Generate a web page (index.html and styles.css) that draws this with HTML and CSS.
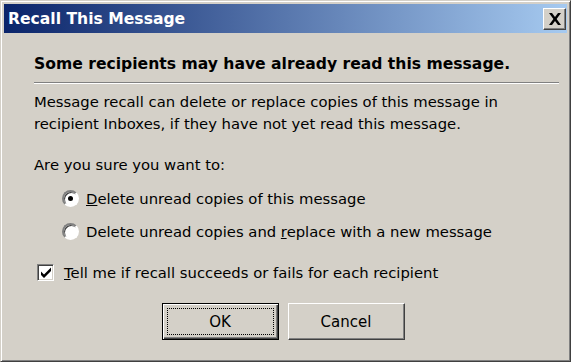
FILE: index.html
```html
<!DOCTYPE html>
<html>
<head>
<meta charset="utf-8">
<link rel="stylesheet" href="styles.css">
</head>
<body>
<div class="window">
  <div class="titlebar">
    <span class="title">Recall This Message</span>
    <span class="close">
      <svg width="14" height="12" viewBox="0 0 14 12"><path d="M1 0h3l3 4 3-4h3L8.6 6 13 12h-3L7 8 4 12H1l4.4-6z" fill="#000"/></svg>
    </span>
  </div>
  <div class="content">
    <div class="heading">Some recipients may have already read this message.</div>
    <p class="para">Message recall can delete or replace copies of this message in<br>recipient Inboxes, if they have not yet read this message.</p>
    <p class="question">Are you sure you want to:</p>
    <div class="option first">
      <span class="radio checked"></span>
      <span><u>D</u>elete unread copies of this message</span>
    </div>
    <div class="option">
      <span class="radio"></span>
      <span>Delete unread copies and <u>r</u>eplace with a new message</span>
    </div>
    <div class="check-row">
      <span class="checkbox">
        <svg width="12" height="11" viewBox="0 0 12 11"><path d="M1 4.5l3 3 7-7v3.5l-7 7-3-3z" fill="#000"/></svg>
      </span>
      <span><u>T</u>ell me if recall succeeds or fails for each recipient</span>
    </div>
    <div class="buttons">
      <button class="btn default"><span class="focus">OK</span></button>
      <button class="btn">Cancel</button>
    </div>
  </div>
</div>
</body>
</html>
```

FILE: styles.css
```css
html, body {
  margin: 0;
  padding: 0;
  background: #d4d0c8;
}
.window {
  width: 571px;
  height: 362px;
  box-sizing: border-box;
  background: #d4d0c8;
  border-top: 1px solid #d4d0c8;
  border-left: 1px solid #d4d0c8;
  border-right: 1px solid #404040;
  border-bottom: 1px solid #404040;
  box-shadow: inset 1px 1px 0 #ffffff, inset -1px -1px 0 #808080;
  padding: 3px 3px 3px 3px;
  font-family: "DejaVu Sans", sans-serif;
  color: #000;
  font-size: 14.8px;
}
.titlebar {
  height: 29px;
  background: linear-gradient(to right, #0a246a, #a6caf0);
  display: flex;
  align-items: center;
  justify-content: space-between;
  padding: 0 1px 0 4px;
}
.title {
  color: #fff;
  font-weight: bold;
  font-size: 15.6px;
}
.close {
  width: 23px;
  height: 22px;
  box-sizing: border-box;
  background: #d4d0c8;
  border-top: 1px solid #fff;
  border-left: 1px solid #fff;
  border-right: 1px solid #404040;
  border-bottom: 1px solid #404040;
  box-shadow: inset -1px -1px 0 #808080;
  display: flex;
  align-items: center;
  justify-content: center;
}
.content {
  padding: 0 8px 0 30px;
}
.heading {
  margin-top: 20px;
  line-height: 22px;
  font-weight: bold;
  font-size: 15.6px;
  padding-bottom: 7px;
  border-bottom: 1px solid #808080;
  box-shadow: 0 1px 0 #ffffff;
}
.para {
  margin: 8px 0 0 0;
  line-height: 22px;
}
.question {
  margin: 19px 0 0 0;
  line-height: 22px;
}
.option {
  display: flex;
  align-items: center;
  height: 22px;
  margin-top: 11px;
  padding-left: 28px;
  gap: 7px;
}
.radio {
  width: 17px;
  height: 17px;
  box-sizing: border-box;
  border-radius: 50%;
  background: #fff;
  border: 2px solid;
  border-color: #808080 #fff #fff #808080;
  box-shadow: inset 1px 1px 0 #404040;
  position: relative;
}
.radio.checked::after {
  content: "";
  position: absolute;
  left: 4px;
  top: 4px;
  width: 5px;
  height: 5px;
  border-radius: 50%;
  background: #000;
}
.check-row {
  display: flex;
  align-items: center;
  height: 22px;
  margin-top: 19px;
  padding-left: 3px;
  gap: 10px;
}
.checkbox {
  width: 17px;
  height: 17px;
  box-sizing: border-box;
  background: #fff;
  border-top: 1px solid #808080;
  border-left: 1px solid #808080;
  border-right: 1px solid #fff;
  border-bottom: 1px solid #fff;
  box-shadow: inset 1px 1px 0 #404040, inset -1px -1px 0 #d4d0c8;
  display: flex;
  align-items: center;
  justify-content: center;
}
.buttons {
  display: flex;
  justify-content: center;
  gap: 9px;
  margin-top: 20px;
  margin-left: -27px;
}
.btn {
  width: 117px;
  height: 37px;
  box-sizing: border-box;
  background: #d4d0c8;
  font-family: "DejaVu Sans", sans-serif;
  font-size: 15px;
  color: #000;
  border-top: 1px solid #fff;
  border-left: 1px solid #fff;
  border-right: 1px solid #404040;
  border-bottom: 1px solid #404040;
  box-shadow: inset -1px -1px 0 #808080;
  padding: 0;
  margin: 0;
}
.btn.default {
  border: 1px solid #000;
  box-shadow: inset 1px 1px 0 #fff, inset -1px -1px 0 #404040, inset -2px -2px 0 #808080;
  padding: 4px;
}
.focus {
  display: flex;
  align-items: center;
  justify-content: center;
  height: 100%;
  box-sizing: border-box;
  border: 1px dotted #000;
}
```
